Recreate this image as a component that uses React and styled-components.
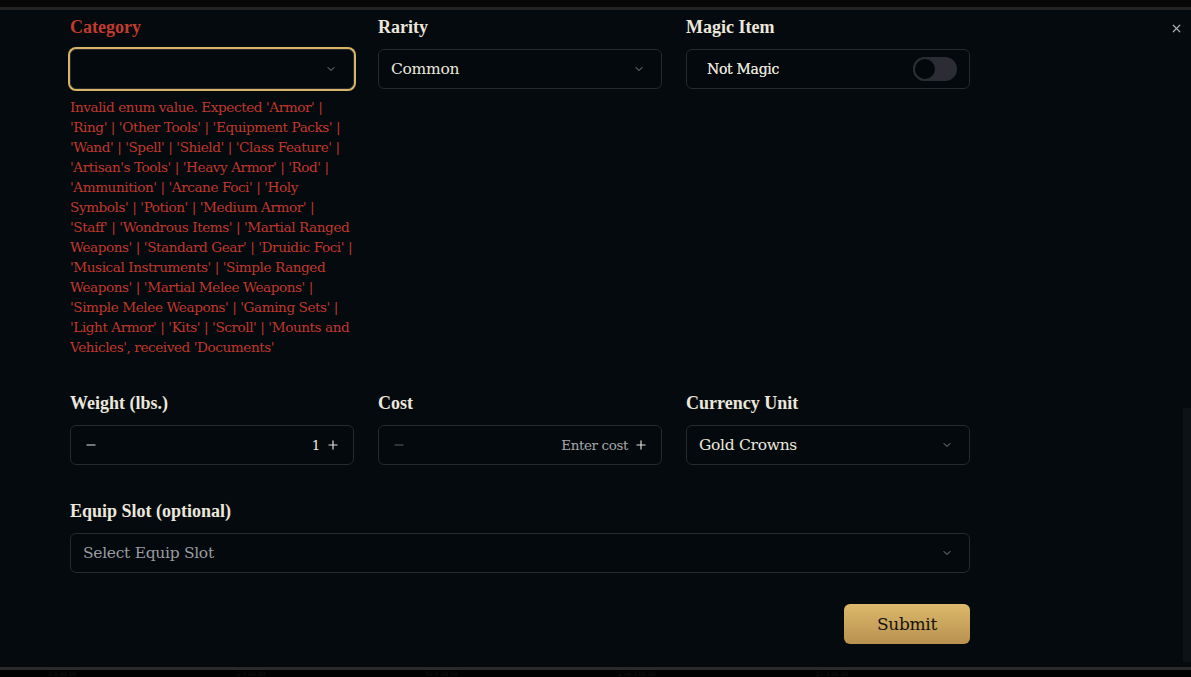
import React from 'react';
import styled, { createGlobalStyle } from 'styled-components';

const GlobalStyle = createGlobalStyle`
  html, body {
    margin: 0;
    padding: 0;
    background: #000000;
    font-family: "DejaVu Serif", serif;
    overflow: hidden;
  }
  * { box-sizing: border-box; }
`;

const errorText =
  "Invalid enum value. Expected 'Armor' | 'Ring' | 'Other Tools' | 'Equipment Packs' | 'Wand' | 'Spell' | 'Shield' | 'Class Feature' | 'Artisan's Tools' | 'Heavy Armor' | 'Rod' | 'Ammunition' | 'Arcane Foci' | 'Holy Symbols' | 'Potion' | 'Medium Armor' | 'Staff' | 'Wondrous Items' | 'Martial Ranged Weapons' | 'Standard Gear' | 'Druidic Foci' | 'Musical Instruments' | 'Simple Ranged Weapons' | 'Martial Melee Weapons' | 'Simple Melee Weapons' | 'Gaming Sets' | 'Light Armor' | 'Kits' | 'Scroll' | 'Mounts and Vehicles', received 'Documents'";

const Chevron = () => (
  <svg width="12" height="12" viewBox="0 0 24 24" fill="none" stroke="#8a8d92" strokeWidth="2" strokeLinecap="round" strokeLinejoin="round">
    <path d="m6 9 6 6 6-6" />
  </svg>
);

const Minus = ({ dim }) => (
  <svg width="14" height="14" viewBox="0 0 24 24" fill="none" stroke={dim ? '#5c5f63' : '#e6e2da'} strokeWidth="2" strokeLinecap="round">
    <path d="M5 12h14" />
  </svg>
);

const Plus = () => (
  <svg width="14" height="14" viewBox="0 0 24 24" fill="none" stroke="#e6e2da" strokeWidth="2" strokeLinecap="round">
    <path d="M5 12h14" />
    <path d="M12 5v14" />
  </svg>
);

const App = () => {
  return (
    <Page>
      <GlobalStyle />
      <TopStrip />
      <Dialog>
        <CloseButton>
          <svg width="13" height="13" viewBox="0 0 24 24" fill="none" stroke="#a9acb0" strokeWidth="2.2" strokeLinecap="round">
            <path d="M18 6 6 18" />
            <path d="m6 6 12 12" />
          </svg>
        </CloseButton>
        <Form>
          <Row>
            <Field>
              <Label error>Category</Label>
              <SelectBox focused>
                <Value />
                <Chevron />
              </SelectBox>
              <ErrorMessage>{errorText}</ErrorMessage>
            </Field>
            <Field>
              <Label>Rarity</Label>
              <SelectBox>
                <Value>Common</Value>
                <Chevron />
              </SelectBox>
            </Field>
            <Field>
              <Label>Magic Item</Label>
              <ToggleBox>
                <ToggleText>Not Magic</ToggleText>
                <Switch>
                  <Knob />
                </Switch>
              </ToggleBox>
            </Field>
          </Row>
          <Row>
            <Field>
              <Label>Weight (lbs.)</Label>
              <Stepper>
                <Minus />
                <StepRight>
                  <StepValue>1</StepValue>
                  <Plus />
                </StepRight>
              </Stepper>
            </Field>
            <Field>
              <Label>Cost</Label>
              <Stepper>
                <Minus dim />
                <StepRight>
                  <StepValue placeholder>Enter cost</StepValue>
                  <Plus />
                </StepRight>
              </Stepper>
            </Field>
            <Field>
              <Label>Currency Unit</Label>
              <SelectBox>
                <Value>Gold Crowns</Value>
                <Chevron />
              </SelectBox>
            </Field>
          </Row>
          <Field>
            <Label>Equip Slot (optional)</Label>
            <SelectBox>
              <Value placeholder>Select Equip Slot</Value>
              <Chevron />
            </SelectBox>
          </Field>
          <Actions>
            <SubmitButton>Submit</SubmitButton>
          </Actions>
        </Form>
        <ScrollThumb />
      </Dialog>
      <BehindRow>
        <span>3 0.00 00</span>
        <span>5 3 00.00</span>
        <span>10 0.00 00</span>
        <span>2 50 3.00 00</span>
        <span>25 3.00 00</span>
      </BehindRow>
    </Page>
  );
};

const Page = styled.div`
  width: 1191px;
  height: 677px;
  background: #000000;
  display: flex;
  flex-direction: column;
`;

const TopStrip = styled.div`
  height: 7px;
  flex-shrink: 0;
  background: #070707;
`;

const Dialog = styled.div`
  position: relative;
  height: 663px;
  flex-shrink: 0;
  background: #040a0e;
  border-top: 3px solid #232323;
  border-bottom: 3px solid #2a2a2a;
  padding: 6px 0 0 70px;
`;

const CloseButton = styled.div`
  position: absolute;
  top: 11px;
  right: 8px;
  width: 14px;
  height: 14px;
  display: flex;
  align-items: center;
  justify-content: center;
`;

const ScrollThumb = styled.div`
  position: absolute;
  right: 0;
  top: 398px;
  width: 8px;
  height: 254px;
  background: #0d1216;
`;

const Form = styled.div`
  width: 900px;
  display: flex;
  flex-direction: column;
  gap: 35px;
`;

const Row = styled.div`
  display: grid;
  grid-template-columns: repeat(3, 284px);
  column-gap: 24px;
  align-items: start;
`;

const Field = styled.div`
  display: flex;
  flex-direction: column;
`;

const Label = styled.div`
  font-family: "Liberation Serif", serif;
  font-weight: 700;
  font-size: 18px;
  line-height: 22px;
  color: ${(props) => (props.error ? '#c33a2e' : '#ece7dd')};
  margin-bottom: 11px;
`;

const SelectBox = styled.div`
  height: 40px;
  border: 1px solid #272a2f;
  border-radius: 6px;
  background: #03090c;
  display: flex;
  align-items: center;
  justify-content: space-between;
  padding: 0 16px 0 12px;
  box-shadow: ${(props) => (props.focused ? '0 0 0 2px #d8b466' : 'none')};
`;

const Value = styled.span`
  font-family: "DejaVu Serif", serif;
  font-size: 15.5px;
  letter-spacing: -0.3px;
  color: ${(props) => (props.placeholder ? '#9a9ca0' : '#ebe7df')};
`;

const ErrorMessage = styled.div`
  margin-top: 8px;
  font-family: "DejaVu Serif", serif;
  font-size: 13.6px;
  line-height: 20px;
  letter-spacing: -0.43px;
  color: #c1372c;
`;

const ToggleBox = styled(SelectBox)`
  padding: 0 12px 0 20px;
`;

const ToggleText = styled.span`
  font-family: "DejaVu Serif", serif;
  font-size: 14px;
  letter-spacing: -0.3px;
  color: #e6e2da;
  text-shadow: 0 0 0.5px #e6e2da;
`;

const Switch = styled.div`
  width: 44px;
  height: 24px;
  border-radius: 12px;
  background: #2c2d34;
  display: flex;
  align-items: center;
`;

const Knob = styled.div`
  width: 24px;
  height: 24px;
  border-radius: 50%;
  background: #03080b;
  border: 2px solid #2c2d34;
`;

const Stepper = styled(SelectBox)`
  padding: 0 13px 0 13px;
`;

const StepRight = styled.div`
  display: flex;
  align-items: center;
  gap: 6px;
`;

const StepValue = styled.span`
  font-family: "DejaVu Serif", serif;
  font-size: 13.5px;
  letter-spacing: -0.4px;
  color: ${(props) => (props.placeholder ? '#a6a7aa' : '#ebe7df')};
`;

const Actions = styled.div`
  display: flex;
  justify-content: flex-end;
  margin-top: -4px;
`;

const SubmitButton = styled.button`
  width: 126px;
  height: 40px;
  border: none;
  border-radius: 6px;
  background: linear-gradient(180deg, #dcb96c 0%, #b8914f 100%);
  font-family: "DejaVu Serif", serif;
  font-size: 17px;
  letter-spacing: -0.3px;
  color: #16130e;
  cursor: pointer;
`;

const BehindRow = styled.div`
  flex: 1;
  display: flex;
  align-items: center;
  gap: 160px;
  padding-left: 48px;
  font-family: "DejaVu Serif", serif;
  font-size: 6px;
  line-height: 7px;
  color: #15181a;
  overflow: hidden;
`;

export default App;
